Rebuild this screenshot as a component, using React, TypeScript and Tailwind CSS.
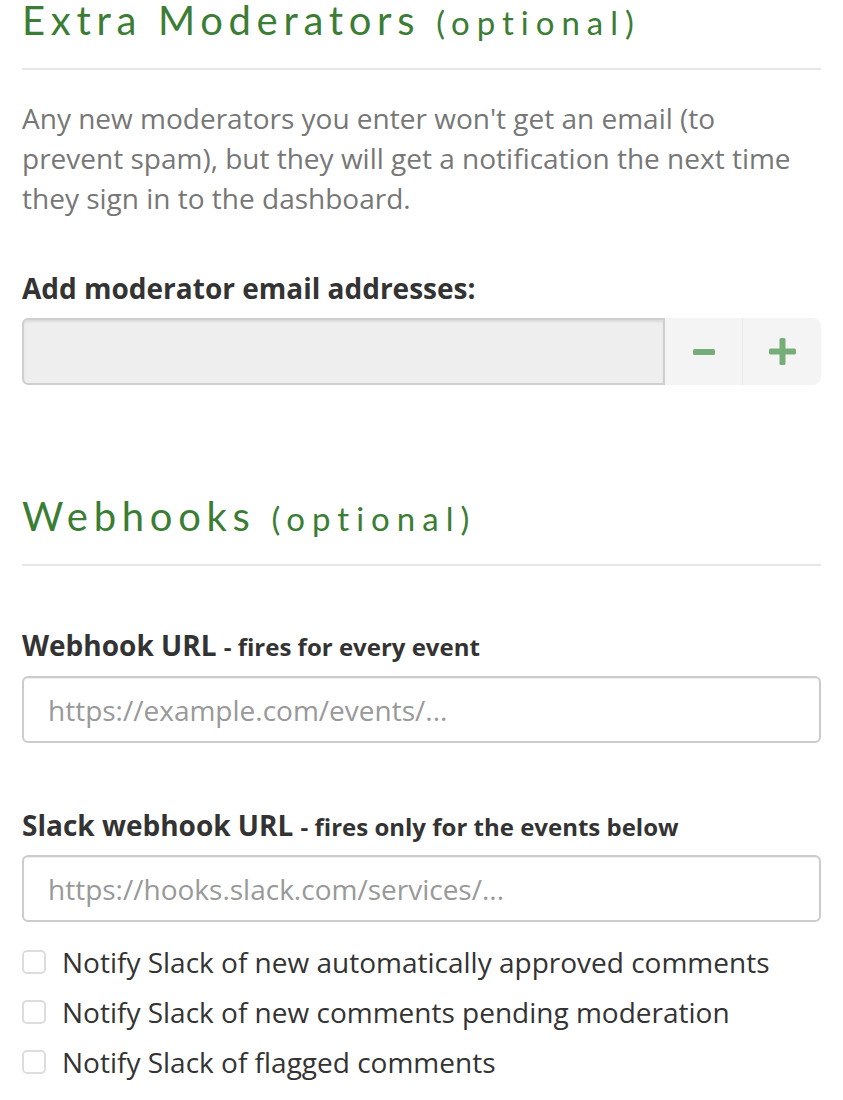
export default function App() {
  const heading = "text-[#3b7d34] font-normal tracking-[5.7px] text-[40px] leading-[40px]";
  const checks = [
    "Notify Slack of new automatically approved comments",
    "Notify Slack of new comments pending moderation",
    "Notify Slack of flagged comments",
  ];

  return (
    <div className="w-[843px] bg-white px-[22px] pb-10 font-['Open_Sans',sans-serif] text-[#333]">
      {/* Extra moderators */}
      <h2 className={heading} style={{ fontFamily: "Lato, sans-serif" }}>
        Extra Moderators <span className="text-[33px] tracking-[7px]">(optional)</span>
      </h2>
      <hr className="mt-[26px] border-t-2 border-[#e6e6e6]" />
      <p className="mt-[28px] text-[28px] leading-[40px] text-[#777]">
        Any new moderators you enter won't get an email (to prevent spam), but they will get a notification the next time
        they sign in to the dashboard.
      </p>

      <label className="mt-[52px] block text-[28px] font-bold leading-[36px] text-[#333]">
        Add moderator email addresses:
      </label>
      <div className="mt-[12px] flex h-[67px]">
        <input
          disabled
          className="h-full flex-1 rounded-l-[6px] border-2 border-[#cfcfcf] bg-[#eeeeee] px-6 shadow-[inset_0_2px_2px_rgba(0,0,0,0.08)]"
        />
        <button className="flex w-[78px] items-center justify-center border-r border-[#e9e9e9] bg-[#f4f4f4]">
          <svg width="22" height="8" viewBox="0 0 22 8">
            <rect x="0" y="1" width="22" height="6" rx="1.5" fill="#76ad79" />
          </svg>
        </button>
        <button className="flex w-[78px] items-center justify-center rounded-r-[8px] bg-[#f4f4f4]">
          <svg width="27" height="27" viewBox="0 0 27 27">
            <rect x="0" y="10.5" width="27" height="6" rx="1.5" fill="#76ad79" />
            <rect x="10.5" y="0" width="6" height="27" rx="1.5" fill="#76ad79" />
          </svg>
        </button>
      </div>

      {/* Webhooks */}
      <h2 className={`${heading} mt-[111px]`} style={{ fontFamily: "Lato, sans-serif" }}>
        Webhooks <span className="text-[33px] tracking-[7px]">(optional)</span>
      </h2>
      <hr className="mt-[26px] border-t-2 border-[#e6e6e6]" />

      <label className="mt-[61px] block text-[28px] font-bold leading-[36px]">
        Webhook URL <span className="text-[24px]">- fires for every event</span>
      </label>
      <input
        placeholder="https://example.com/events/..."
        className="mt-[11px] block h-[67px] w-full rounded-[6px] border-2 border-[#cccccc] px-6 text-[28px] placeholder:text-[#999] shadow-[inset_0_1px_1px_rgba(0,0,0,0.075)]"
      />

      <label className="mt-[64px] block text-[28px] font-bold leading-[36px]">
        Slack webhook URL <span className="text-[24px]">- fires only for the events below</span>
      </label>
      <input
        placeholder="https://hooks.slack.com/services/..."
        className="mt-[10px] block h-[67px] w-full rounded-[6px] border-2 border-[#cccccc] px-6 text-[28px] placeholder:text-[#999] shadow-[inset_0_1px_1px_rgba(0,0,0,0.075)]"
      />

      <div className="mt-[15px] flex flex-col">
        {checks.map((c) => (
          <label key={c} className="flex h-[50px] items-center gap-[16px] text-[28px] text-[#333]">
            <span className="h-[24px] w-[24px] shrink-0 rounded-[5px] border-2 border-[#dddddd] bg-white" />
            {c}
          </label>
        ))}
      </div>
    </div>
  );
}
